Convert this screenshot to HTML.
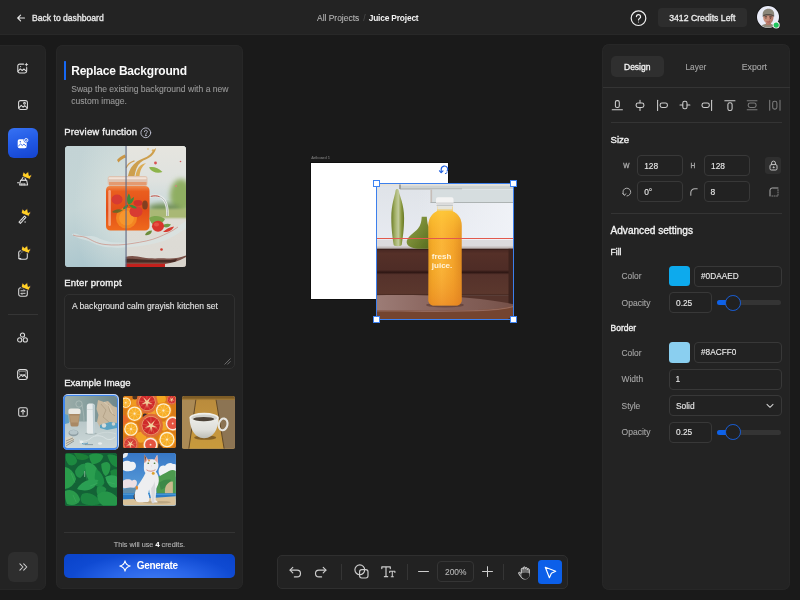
<!DOCTYPE html>
<html lang="en">
<head>
<meta charset="utf-8">
<title>Juice Project – Replace Background</title>
<style>
*{box-sizing:border-box;margin:0;padding:0}
html,body{width:800px;height:600px;overflow:hidden;background:#1a1a1a}
body{font-family:"Liberation Sans",sans-serif;color:#fff;position:relative;-webkit-font-smoothing:antialiased}
#app{position:absolute;left:0;top:0;width:800px;height:600px;will-change:transform}
.abs{position:absolute}
.t{position:absolute;white-space:nowrap;line-height:12px;height:12px;font-size:8.5px;-webkit-text-stroke:.1px currentColor}
.m{-webkit-text-stroke:.32px currentColor}
.b{font-weight:700;-webkit-text-stroke:0}
.g{color:#a3a3a3}
#hdr{position:absolute;left:0;top:0;width:800px;height:35px;background:#232323;border-bottom:1px solid #282828}
#side{position:absolute;left:0;top:45px;width:46px;height:545px}
#side:before{content:"";position:absolute;left:-3px;top:0;width:49px;height:545px;background:#232323;border-radius:0 6.500px 6.500px 0;box-shadow:inset 0 0 0 1px #272727}
#left{position:absolute;left:56px;top:45px;width:187px;height:544px;background:#232323;border-radius:6.500px;box-shadow:inset 0 0 0 1px #272727}
#right{position:absolute;left:603px;top:45px;width:187px;height:544px}
#right:before{content:"";position:absolute;left:-1px;top:-1px;width:188px;height:546px;background:#232323;border-radius:7px;box-shadow:inset 0 0 0 1px #272727}
.hr{position:absolute;height:1px;background:#333}
.inp{position:absolute;height:21px;border:1px solid #383838;border-radius:4px;background:#222}
.ico{position:absolute;overflow:visible}
svg{display:block}
.hd{width:6.800px;height:6.800px;background:#fff;border:1px solid #3f84f3}
.ex{border-radius:2.500px;overflow:hidden}
</style>
</head>
<body>
<div id="app">

<!-- ================= HEADER ================= -->
<div id="hdr">
  <svg class="ico" style="left:17px;top:13.5px" width="8" height="8" viewBox="0 0 8 8" fill="none" stroke="#e6e6e6" stroke-width="1.1" stroke-linecap="round" stroke-linejoin="round"><path d="M7.5 4H0.8M3.6 1.1 0.7 4l2.9 2.9"/></svg>
  <div class="t m" style="left:32px;top:11.5px;font-size:8.6px;color:#e8e8e8">Back to dashboard</div>
  <div class="t" style="left:317px;top:11.5px;font-size:8.45px;color:#b4b4b4">All Projects</div>
  <div class="t" style="left:363.2px;top:11.5px;font-size:8.5px;color:#4a4a4a">/</div>
  <div class="t b" style="left:368.7px;top:11.5px;font-size:8.4px;letter-spacing:-.18px;color:#f2f2f2">Juice Project</div>
  <!-- help -->
  <svg class="ico" style="left:630px;top:9.5px" width="17" height="17" viewBox="0 0 17 17" fill="none" stroke="#f0f0f0" stroke-width="1.2" stroke-linecap="round" stroke-linejoin="round"><circle cx="8.5" cy="8.2" r="7.3"/><path d="M6.4 6.6a2.1 2.1 0 1 1 3.1 1.9c-.7.4-1 .8-1 1.5"/><circle cx="8.5" cy="12" r=".5" fill="#f0f0f0" stroke="none"/></svg>
  <div class="abs" style="left:658px;top:8px;width:89px;height:19px;background:#2d2d2d;border-radius:4px"></div>
  <div class="t m" style="left:669.2px;top:11.5px;font-size:8.7px;color:#ededed">3412 Credits Left</div>
  <!-- avatar -->
  <svg class="ico" style="left:757px;top:6px" width="24" height="24" viewBox="0 0 24 24">
    <defs><clipPath id="avc"><circle cx="11" cy="11" r="10.700"/></clipPath></defs>
    <circle cx="11" cy="11" r="11.700" fill="#141414"/>
    <circle cx="11" cy="11" r="11" fill="#e9ebf7"/>
    <g clip-path="url(#avc)">
      <path d="M2.500 24c0-4.200 3.500-6.300 8.700-6.300s8.300 2.100 8.300 6.300z" fill="#8e8a7c"/>
      <rect x="8.800" y="14" width="5" height="5.200" fill="#b27a69"/>
      <ellipse cx="11.300" cy="11.400" rx="5.100" ry="6.100" fill="#c88e7b"/>
      <path d="M16 9c.8 2 .6 5-1 7.500-.8 1.200-2 2-3.500 2l1-10z" fill="#a86e60" opacity=".55"/>
      <path d="M5.700 9.600C5.300 5 7.900 2.800 11.500 2.800c3.700 0 6.100 2.300 5.700 6.700-1.600-1.200-3.600-1.600-5.900-1.600-2.300 0-4.100.5-5.600 1.700z" fill="#8b867a"/>
      <path d="M5.600 9.700c1.500-1.200 3.300-1.600 5.700-1.600 2.400 0 4.300.4 5.900 1.500l-.1 1.100c-1.700-.9-3.500-1.200-5.800-1.200-2.300 0-4 .3-5.600 1.300z" fill="#55504a"/>
      <path d="M7.600 10.900c.8-.4 1.700-.4 2.500 0M12.300 10.900c.8-.4 1.700-.4 2.500 0" stroke="#3c2c28" stroke-width=".8" fill="none"/>
      <circle cx="8.900" cy="12" r=".55" fill="#2c2220"/><circle cx="13.500" cy="12" r=".55" fill="#2c2220"/>
      <path d="M9.600 15.700c1 .5 2.200.5 3.200 0" stroke="#a04a48" stroke-width=".9" fill="none"/>
    </g>
    <circle cx="19.200" cy="19.100" r="3.500" fill="#f4f4f4"/>
    <circle cx="19.200" cy="19.100" r="2.600" fill="#1fc55c"/>
  </svg>
</div>

<!-- ================= SIDEBAR ================= -->
<div id="side">
  <!-- 1 image+ -->
  <svg class="ico" style="left:17px;top:17.500px" width="12" height="11" viewBox="0 0 12 11" fill="none" stroke="#dcdcdc" stroke-width="1.050" stroke-linecap="round" stroke-linejoin="round"><path d="M6.600 1.100H2.700A1.900 1.900 0 0 0 .8 3v5.100A1.900 1.900 0 0 0 2.700 10h5.100a1.900 1.900 0 0 0 1.900-1.900V4.600"/><path d="M.9 8.300 3.300 5.900l1.900 1.600 1.700-1.500 2.700 2.300"/><path d="M9.400.3v2.600M8.100 1.600h2.600" stroke-width=".9"/><circle cx="3.600" cy="3.600" r=".6" fill="#dcdcdc" stroke="none"/></svg>
  <!-- 2 image -->
  <svg class="ico" style="left:17.500px;top:55px" width="10" height="10" viewBox="0 0 10 10" fill="none" stroke="#dcdcdc" stroke-width="1.050" stroke-linecap="round" stroke-linejoin="round"><rect x=".6" y=".6" width="8.800" height="8.800" rx="2"/><path d="M.8 7.900 3.300 5.400l1.800 1.700 1.600-1.500 2.500 2.300"/><circle cx="6.500" cy="3.300" r=".9"/></svg>
  <!-- 3 active -->
  <div class="abs" style="left:8px;top:83px;width:29.500px;height:29.500px;border-radius:6px;background:linear-gradient(165deg,#3772f3 0%,#2159e4 50%,#1443cf 100%)"></div>
  <svg class="ico" style="left:17px;top:92.500px" width="12" height="11" viewBox="0 0 12 11"><path d="M2.500 1.300h4.100a2.600 2.600 0 0 0 3.100 3.300V8.500a1.800 1.800 0 0 1-1.800 1.800H2.500A1.800 1.800 0 0 1 .7 8.500V3.100a1.800 1.800 0 0 1 1.800-1.800z" fill="#fff"/><circle cx="9.200" cy="2.200" r="1.700" fill="none" stroke="#fff" stroke-width=".9"/><circle cx="9.200" cy="2.200" r=".5" fill="#fff"/><path d="M1.200 8.200 3.600 6l1.700 1.500L6.900 6.100l2.400 2.200" fill="none" stroke="#2a60e6" stroke-width=".9" stroke-linejoin="round"/><circle cx="3.300" cy="3.800" r=".7" fill="#2a60e6"/></svg>
  <!-- 4 eraser + crown -->
  <svg class="ico" style="left:16.500px;top:130.500px" width="14" height="11" viewBox="0 0 14 11" fill="none" stroke="#dcdcdc" stroke-width="1.050" stroke-linecap="round" stroke-linejoin="round"><path d="M6.200.9 4.300 4.200h4.600L7.600.9z"/><path d="M3.600 4.200h6l1 4.700H2.600z"/><path d="M.5 6.800h1.600M4.200 8.900V7.600M6 8.900V7.300M7.800 8.900V7.600"/></svg>
  <!-- 5 wand + crown -->
  <svg class="ico" style="left:17.500px;top:169px" width="10" height="10" viewBox="0 0 10 10" fill="none" stroke="#dcdcdc" stroke-width="1.050" stroke-linecap="round" stroke-linejoin="round"><path d="M1 8.100 6.500 2.100l1.400 1.300L2.400 9.400z"/><path d="M5.300 3.400l1.400 1.300" stroke-width=".8"/><path d="M2.600 6.300l1.400 1.300M3.900 4.900l1.400 1.300" stroke-width=".6" stroke="#777"/><circle cx="7.100" cy="8" r=".7" fill="#dcdcdc" stroke="none"/></svg>
  <!-- 6 square corner + crown -->
  <svg class="ico" style="left:17.500px;top:204.500px" width="10" height="10" viewBox="0 0 10 10" fill="none" stroke="#dcdcdc" stroke-width="1.050" stroke-linecap="round" stroke-linejoin="round"><rect x=".7" y=".7" width="8.600" height="8.600" rx="2"/><path d="M1 7.300c.3-2.200 1.200-3.700 2.300-4.600C4.400 1.800 5.800 1.300 7.500 1" stroke="#8a8a8a" stroke-width=".7"/><path d="M.9 8.600h1.800" stroke-width="1.300"/></svg>
  <!-- 7 swap + crown -->
  <svg class="ico" style="left:17.500px;top:241.700px" width="10" height="10" viewBox="0 0 10 10" fill="none" stroke="#dcdcdc" stroke-width="1.050" stroke-linecap="round" stroke-linejoin="round"><rect x=".7" y=".7" width="8.600" height="8.600" rx="2"/><path d="M2.900 3.800h4.300L6 2.600M7.100 6.300H2.800L4 7.500" stroke-width=".95"/></svg>
  <!-- crowns -->
  <svg class="ico" style="left:21.7px;top:124.6px" width="10.400" height="9.250" viewBox="0 0 9 8"><g transform="rotate(22 4.500 4)"><path d="M.9 7 .5 2.300l2.300 1.800L4.500.8l1.700 3.300 2.300-1.800L8.100 7z" fill="#ffc61a" stroke="#1e1e30" stroke-width=".7" stroke-linejoin="round"/><path d="M1.600 6.300 1.300 3.600l1.700 1.200L4.500 2l1.500 2.800 1.700-1.200-.3 2.700z" fill="#ffd028"/></g></svg>
  <svg class="ico" style="left:21.2px;top:161.6px" width="10.400" height="9.250" viewBox="0 0 9 8"><g transform="rotate(22 4.500 4)"><path d="M.9 7 .5 2.300l2.300 1.800L4.500.8l1.700 3.300 2.300-1.800L8.100 7z" fill="#ffc61a" stroke="#1e1e30" stroke-width=".7" stroke-linejoin="round"/><path d="M1.600 6.300 1.300 3.600l1.700 1.200L4.500 2l1.500 2.800 1.700-1.200-.3 2.700z" fill="#ffd028"/></g></svg>
  <svg class="ico" style="left:21.4px;top:199.1px" width="10.400" height="9.250" viewBox="0 0 9 8"><g transform="rotate(22 4.500 4)"><path d="M.9 7 .5 2.300l2.300 1.800L4.500.8l1.700 3.300 2.300-1.800L8.100 7z" fill="#ffc61a" stroke="#1e1e30" stroke-width=".7" stroke-linejoin="round"/><path d="M1.600 6.300 1.300 3.600l1.700 1.200L4.500 2l1.500 2.800 1.700-1.200-.3 2.700z" fill="#ffd028"/></g></svg>
  <svg class="ico" style="left:21.4px;top:236.1px" width="10.400" height="9.250" viewBox="0 0 9 8"><g transform="rotate(22 4.500 4)"><path d="M.9 7 .5 2.300l2.300 1.800L4.500.8l1.700 3.300 2.300-1.800L8.100 7z" fill="#ffc61a" stroke="#1e1e30" stroke-width=".7" stroke-linejoin="round"/><path d="M1.600 6.300 1.300 3.600l1.700 1.200L4.500 2l1.500 2.800 1.700-1.200-.3 2.700z" fill="#ffd028"/></g></svg>
  <div class="hr" style="left:8px;top:269.200px;width:29.500px;background:#353535"></div>
  <!-- 8 circles -->
  <svg class="ico" style="left:16px;top:286.500px" width="13" height="12" viewBox="0 0 13 12" fill="none" stroke="#dcdcdc" stroke-width="1.050"><circle cx="6.500" cy="3" r="2.100"/><circle cx="3.700" cy="7.900" r="2.100"/><circle cx="9.300" cy="7.900" r="2.100"/></svg>
  <!-- 9 gallery -->
  <svg class="ico" style="left:17px;top:324px" width="11" height="11" viewBox="0 0 11 11" fill="none" stroke="#dcdcdc" stroke-width="1.050" stroke-linecap="round" stroke-linejoin="round"><rect x=".6" y=".6" width="9.800" height="9.800" rx="2.400"/><rect x="2.100" y="2.300" width="6.800" height="3.200" rx=".6" stroke-width=".8" stroke="#9a9a9a"/><path d="M1.200 9 4.200 6l1.500 1.400L7.200 6l2.700 2.600"/></svg>
  <!-- 10 upload -->
  <svg class="ico" style="left:17.500px;top:362px" width="10" height="10" viewBox="0 0 10 10" fill="none" stroke="#dcdcdc" stroke-width="1.050" stroke-linecap="round" stroke-linejoin="round"><rect x=".7" y=".7" width="8.600" height="8.600" rx="1.800"/><path d="M5 7.300V3.100M3.200 4.700 5 2.900l1.800 1.800"/></svg>
  <!-- expand -->
  <div class="abs" style="left:8px;top:506.500px;width:29.500px;height:30px;border-radius:6px;background:#2e2e2e"></div>
  <svg class="ico" style="left:18.500px;top:517.500px" width="9" height="8" viewBox="0 0 9 8" fill="none" stroke="#d0d0d0" stroke-width="1.050" stroke-linecap="round" stroke-linejoin="round"><path d="M.9.900 4 4 .9 7.100M4.700.9 7.800 4 4.700 7.100"/></svg>
</div>

<!-- ================= LEFT PANEL ================= -->
<div id="left">
  <div class="abs" style="left:8px;top:16px;width:2.200px;height:19px;background:#1668f5;border-radius:.5px"></div>
  <div class="t b" style="left:15.200px;top:17.800px;line-height:16px;height:16px;font-size:12px;letter-spacing:-.205px;color:#fafafa">Replace Background</div>
  <div class="t" style="left:15.200px;top:38.300px;font-size:8.580px;color:#989898">Swap the existing background with a new</div>
  <div class="t" style="left:15.200px;top:50.300px;font-size:8.580px;color:#989898">custom image.</div>
  <div class="t m" style="left:8.200px;top:81px;font-size:9.500px;letter-spacing:.21px;color:#f4f4f4">Preview function</div>
  <svg class="ico" style="left:83.500px;top:81.800px" width="12" height="12" viewBox="0 0 12 12" fill="none" stroke="#b9bccb" stroke-width=".95" stroke-linecap="round"><circle cx="5.800" cy="5.800" r="4.900"/><path d="M4.400 4.700a1.450 1.450 0 1 1 2.100 1.300c-.5.300-.7.500-.7 1"/><circle cx="5.800" cy="8.300" r=".35" fill="#b9bccb"/></svg>
  <!-- preview image -->
  <div class="abs" id="prev" style="left:9.300px;top:101px;width:121px;height:121px;border-radius:3.500px;overflow:hidden;background:#cfdcdc"><svg width="121" height="121" viewBox="0 0 121 121">
<defs>
<linearGradient id="pl" x1="0" y1="0" x2=".35" y2="1"><stop offset="0" stop-color="#c3d3d5"/><stop offset=".5" stop-color="#c4d5d6"/><stop offset="1" stop-color="#a9c5cd"/></linearGradient>
<radialGradient id="pl2" cx=".95" cy=".5" r=".8"><stop offset="0" stop-color="#dbe3df" stop-opacity=".95"/><stop offset="1" stop-color="#dbe3df" stop-opacity="0"/></radialGradient>
<linearGradient id="pr" x1="0" y1="0" x2="0" y2="1"><stop offset="0" stop-color="#e6e5df"/><stop offset=".28" stop-color="#dfe2df"/><stop offset=".45" stop-color="#cfdbdc"/><stop offset=".55" stop-color="#ccd8d6"/><stop offset=".62" stop-color="#dedcd6"/><stop offset="1" stop-color="#dcdad4"/></linearGradient>
<linearGradient id="pj" x1="0" y1="0" x2="0" y2="1"><stop offset="0" stop-color="#ef8a4c"/><stop offset=".12" stop-color="#ea5e1e"/><stop offset=".55" stop-color="#e24d18"/><stop offset="1" stop-color="#ef6a1c"/></linearGradient>
<filter id="b1" x="-30%" y="-30%" width="160%" height="160%"><feGaussianBlur stdDeviation="1"/></filter>
<filter id="b2" x="-30%" y="-30%" width="160%" height="160%"><feGaussianBlur stdDeviation="2.500"/></filter>
<filter id="b05" x="-30%" y="-30%" width="160%" height="160%"><feGaussianBlur stdDeviation=".45"/></filter>
<clipPath id="pcl"><rect x="0" y="0" width="60.800" height="121"/></clipPath>
<clipPath id="pcr"><rect x="60.800" y="0" width="60.200" height="121"/></clipPath>
</defs>
<rect width="121" height="121" fill="url(#pl)"/>
<rect width="61" height="121" fill="url(#pl2)"/>
<g clip-path="url(#pcr)">
  <rect x="60" width="61" height="121" fill="url(#pr)"/>
  <!-- trees / field -->
  <ellipse cx="116" cy="50" rx="11" ry="17" fill="#8fae62" filter="url(#b2)"/>
  <ellipse cx="99" cy="62" rx="16" ry="4.500" fill="#6f8f55" filter="url(#b2)"/>
  <rect x="84" y="63" width="40" height="10" fill="#a9b874" filter="url(#b1)"/>
  <rect x="84" y="72.500" width="40" height="4" fill="#dedcd6" filter="url(#b1)"/>
  <!-- bottom berries -->
  <path d="M60 111c6-2 12-1 18 .5 8 1.500 16 .5 24 1 7 .5 13-1 19-3v11.500H60z" fill="#6a3a30" opacity=".85" filter="url(#b05)"/>
  <path d="M60 113c8-1 18 1 28 1 9 0 17 .5 24-1l-2 3.500H60z" fill="#3a201a" opacity=".8" filter="url(#b05)"/>
  <rect x="60" y="117.800" width="46" height="3.200" fill="#c4201c"/>
  <path d="M100 118c7-1 14-3 21-7v10h-21z" fill="#d8d4cc" filter="url(#b05)"/>
  <circle cx="96.500" cy="103.500" r="1.300" fill="#d4382c"/>
</g>
<!-- water puddle -->
<path d="M7 52c3-1.500 6 .5 9 1.500 5 1.500 10-.5 15 1.500 5 2 10 5 20 5.500 12 .6 22-1 33-3.500 9-2 16-4 22-8 5-3 9-6 15-10v7c-6 4-11 8-18 11-9 4-20 6-32 7.500-11 1.300-22 1.500-30 .5-8-1-13-4.500-19-6.500-5-1.600-10-2-15-6z" transform="translate(0 36)" fill="#d9e3e3" opacity=".75" filter="url(#b05)"/>
<path d="M8 89c4 2 8 .5 13 2.500 6 2.500 10 6 19 7 9 1 18 .5 27-1 10-1.600 19-3 27-6.500 6-2.600 12-5 19-10" fill="none" stroke="#c97868" stroke-width=".7" opacity=".8" filter="url(#b05)"/>
<!-- splash -->
<g clip-path="url(#pcr)">
<path d="M63 30c1-6 4-11 9-14.500 4-2.700 9-3.500 13-7 2-1.800 3.500-4.500 6-6.500-.3 2.600-1.800 5.500-4.500 8-3 2.800-7.500 3.500-11 6.500-3.500 3-5 8-6 13.500z" fill="#c8902e" opacity=".82" filter="url(#b05)"/>
<path d="M70.500 30c.8-4.500 2.200-8 5-10.500 1.600-1.400 3.500-2.200 5.500-2.600-1.700 1.500-3.300 3.200-4.500 5.600-1.200 2.400-1.700 5-2 7.500z" fill="#d9a23e" opacity=".85"/>
<path d="M61 22c1.500-3.500 4.500-6 8.500-7.200" stroke="#c98a2a" stroke-width="1.300" fill="none" opacity=".75"/>
<circle cx="88" cy="4.500" r="1.200" fill="#d9a23e" opacity=".8"/><circle cx="83" cy="3" r=".8" fill="#d9a23e" opacity=".7"/>
<path d="M84 21.500c4-1.200 9 0 13.500 4.500-4.500 1.800-10.500.8-13.500-4.500z" fill="#8db44a"/>
<circle cx="90.500" cy="17" r="1.400" fill="#d95050"/>
<circle cx="115.500" cy="15.500" r=".8" fill="#d46060"/>
<circle cx="111" cy="40" r=".9" fill="#d88080"/>
</g>
<g clip-path="url(#pcl)">
<path d="M52 14c2-2.500 5-4.500 8-5.500l1 3c-3 1-5.500 2.500-7.500 5z" fill="#c98a2a" opacity=".85"/>
</g>
<!-- handle -->
<path d="M84.500 50.500c6-1.500 12-.5 15 4 2.500 4 3.200 9 3 15.500" fill="none" stroke="#eef0ee" stroke-width="2.600" opacity=".9" filter="url(#b05)"/>
<path d="M84.500 50.500c6-1.500 12-.5 15 4 2.500 4 3.200 9 3 15.500" fill="none" stroke="#8f9a9c" stroke-width=".7" opacity=".8"/>
<path d="M86 50.400c3-.8 6-.8 8.500.3" fill="none" stroke="#c83a2a" stroke-width="1" opacity=".8"/>
<!-- jar -->
<rect x="42.700" y="30" width="39.800" height="9.500" rx="2.500" fill="#dfc0ac" opacity=".9"/>
<rect x="43.500" y="31.200" width="38" height="2" rx="1" fill="#f4e6dc" opacity=".9"/>
<rect x="44" y="36" width="37.500" height="3.500" fill="#e59060" opacity=".8"/>
<path d="M45 40h35c2.800 0 4.500 1.800 4.500 4.500V80c0 2.800-1.700 4.600-4.500 4.600H45.500c-2.800 0-4.500-1.800-4.500-4.600V44.500c0-2.700 1.200-4.500 4-4.500z" fill="url(#pj)"/>
<rect x="43.300" y="44" width="2.600" height="36" rx="1.300" fill="#f6b89c" opacity=".8" filter="url(#b05)"/>
<!-- orange slice -->
<circle cx="61.500" cy="72" r="10.500" fill="#f58a22" opacity=".9" filter="url(#b05)"/>
<circle cx="61.500" cy="72" r="7.500" fill="#f79a30" opacity=".8"/>
<!-- strawberries in jar -->
<ellipse cx="52" cy="53.500" rx="5.500" ry="5" fill="#d63a30" filter="url(#b05)"/>
<ellipse cx="71" cy="65.500" rx="6.500" ry="5.500" fill="#d83a32" filter="url(#b05)"/>
<ellipse cx="73" cy="57" rx="4.500" ry="3" fill="#d0322c" filter="url(#b05)"/>
<ellipse cx="80" cy="59" rx="2.800" ry="4.500" fill="#6a3a22" opacity=".8" filter="url(#b05)"/>
<!-- mint -->
<path d="M61.500 58c-2-3.500-1.500-7.500.5-10.500 2 3 2.500 7 .5 10.500zM62.500 58c0-3 1.500-5.500 4.500-7-.2 3.500-1.600 6-4.500 7zM62 58.500c3-.5 6 .5 8 3.500-3.500.5-6-.5-8-3.500zM61.500 58.500c-2.500 0-4.500 1.500-5.500 4.500 3-.2 5-1.700 5.500-4.500z" fill="#3f8a3a" transform="translate(0 -1.500) scale(1.030)"/>
<path d="M47 66c3-3 7-3.500 11-2-3.500 3-7.500 3.600-11 2z" fill="#5a6a2a" opacity=".85"/>
<!-- outside strawberry & leaves -->
<path d="M84 72c5-3 11-2.500 16 1-2 4-6 6.500-10 6.500-3-1-5-4-6-7.500z" fill="#7da650" filter="url(#b05)"/>
<path d="M97 80c2.500-2.500 6-3 9-1.500-2 3-5.500 4-9 1.500z" fill="#6f9a48"/>
<path d="M80 89c1-3 3.500-4.500 7-4.500-.5 3.500-3 5.300-7 4.500z" fill="#6c8c3a"/>
<ellipse cx="93" cy="80.200" rx="6" ry="5.500" fill="#da342c"/>
<ellipse cx="91.500" cy="78.500" rx="2.500" ry="2" fill="#ea5a4c" opacity=".8"/>
<path d="M98 86c3-3 7-5 11-5.500-1.500 3.500-5.500 6-11 5.500z" fill="#d63a30"/>
<!-- divider -->
<rect x="60.500" y="0" width="1.100" height="121" fill="#5b6781"/>
</svg></div>
  <div class="t m" style="left:8.200px;top:232px;font-size:9.500px;letter-spacing:.22px;color:#f4f4f4">Enter prompt</div>
  <div class="abs" style="left:8px;top:249px;width:171px;height:74.500px;border:1px solid #303030;border-radius:5px;background:#222"></div>
  <div class="t" style="left:16px;top:254.800px;font-size:8.560px;color:#e4e4e4">A background calm grayish kitchen set</div>
  <svg class="ico" style="left:167.500px;top:312.500px" width="7" height="7" viewBox="0 0 7 7" fill="none" stroke="#8c8c8c" stroke-width=".7" stroke-linecap="round"><path d="M.8 6.200 6.200.8M3.600 6.200 6.200 3.600"/></svg>
  <div class="t m" style="left:8.200px;top:332.300px;font-size:9.550px;color:#f4f4f4">Example Image</div>
  <!-- examples -->
  <div class="abs" style="left:6.700px;top:349px;width:56.300px;height:56.400px;border-radius:5px;background:#c3d6f4"></div><div class="abs" style="left:7.400px;top:349.700px;width:54.900px;height:55px;border-radius:4.400px;background:#3f86ee"></div>
  <div class="abs ex" id="ex1" style="left:8.700px;top:351px;width:52.300px;height:52.400px;border-radius:3.200px;background:#aebcc0"><svg width="52.400" height="52.600" viewBox="0 0 52.400 52.600" preserveAspectRatio="none">
<defs><linearGradient id="e1a" x1="0" y1="0" x2="1" y2="0"><stop offset="0" stop-color="#9cada9"/><stop offset=".4" stop-color="#88a09f"/><stop offset="1" stop-color="#6f878b"/></linearGradient>
<linearGradient id="e1b" x1="0" y1="0" x2="0" y2="1"><stop offset="0" stop-color="#b9c8c9"/><stop offset="1" stop-color="#cdd8d8"/></linearGradient>
<filter id="e1f" x="-20%" y="-20%" width="140%" height="140%"><feGaussianBlur stdDeviation=".4"/></filter></defs>
<rect width="52.400" height="52.600" fill="url(#e1a)"/>
<path d="M0 27c12-2 26-2 52.400 1v24.600H0z" fill="url(#e1b)"/>
<!-- paper -->
<path d="M33 4l6 2 4-1 5 5 4 1.500V27l-6 3-5-2-6 3-3-5 1.500-7-2-6z" fill="#c9b99f" filter="url(#e1f)"/>
<path d="M36 8l5 6-3 7 6 5M43 8l2 8 5 4" stroke="#a8977c" stroke-width=".8" fill="none" opacity=".8"/>
<path d="M39 6l5 4 4 8" stroke="#e2d6c0" stroke-width=".8" fill="none" opacity=".8"/>
<!-- blue items -->
<path d="M35 29l10-3 7 1v5l-10 2-7-2z" fill="#5ba3c2" filter="url(#e1f)"/>
<path d="M0 18l3 1 1 8-4 1z" fill="#5f9fc4"/>
<circle cx="39" cy="29.500" r="2.200" fill="#d8dcda"/>
<circle cx="48.500" cy="28" r="1.800" fill="#cfd2cc"/>
<!-- swirl -->
<circle cx="14" cy="8" r="3.200" fill="none" stroke="#c6d0cd" stroke-width=".6" opacity=".8"/>
<path d="M17 9c1 5 2 10 2 16" fill="none" stroke="#c6d0cd" stroke-width=".6" opacity=".7"/>
<!-- coffee cup -->
<path d="M4.200 17.500h10.600l-1.300 11.500c-.2 1.200-1 1.600-2.300 1.600H7.800c-1.300 0-2.100-.4-2.300-1.600z" fill="#a98964"/>
<path d="M4.900 19.500h9.200l-.8 7H5.700z" fill="#b89a74"/>
<path d="M3.400 14.400c0-1.300 1.200-2 2.500-2h7.200c1.300 0 2.500.7 2.500 2v2.300c0 .8-.5 1.200-1.300 1.200H4.700c-.8 0-1.300-.4-1.300-1.200z" fill="#e9e9e3"/>
<!-- bottle -->
<ellipse cx="26" cy="37.500" rx="6" ry="1.200" fill="#8fa0a0" opacity=".6" filter="url(#e1f)"/>
<path d="M21.800 10c0-1.600 1-2.500 2.600-2.500h2.800c1.600 0 2.600.9 2.600 2.500v26c0 1.200-.8 1.800-2 1.800h-4c-1.200 0-2-.6-2-1.800z" fill="#e6ebeb"/>
<path d="M27.600 8c1.400.2 2.200 1 2.200 2.500v26c0 1-.6 1.600-1.500 1.800z" fill="#b9cbd0"/>
<rect x="21.800" y="13" width="8" height=".5" fill="#c3cdcd"/>
<!-- earbuds, cables -->
<path d="M14 44c4 2 9 1 12-2 4-3 10-3 14 0 3 2.500 7 2 10-1" fill="none" stroke="#e4ecec" stroke-width=".7" opacity=".9"/>
<path d="M30 40c5-4 14-5 21-2" fill="none" stroke="#e0e8e8" stroke-width=".5" opacity=".8"/>
<ellipse cx="16.500" cy="46" rx="2" ry="1.300" fill="#e9eeee"/>
<ellipse cx="35" cy="47.500" rx="2" ry="1.300" fill="#e9eeee"/>
<path d="M17 47.500c2 1 4 .5 6-.5" stroke="#4f93b8" stroke-width=".9" fill="none"/>
<rect x="20" y="48.300" width="8" height=".8" fill="#6d8088" opacity=".8"/>
<!-- round tin -->
<ellipse cx="8.500" cy="37" rx="5" ry="3.200" fill="#8e9ea3"/>
<ellipse cx="8.500" cy="36.300" rx="4" ry="2.300" fill="#b7c6ca"/>
<!-- notebook -->
<path d="M0 42l6-2 4 3-10 8z" fill="#d8d3c3"/>
<path d="M1 45l7-3M1 47.500l8-4M1 50l8-5" stroke="#5c5a52" stroke-width=".5"/>
</svg></div>
  <div class="abs ex" id="ex2" style="left:66.900px;top:350.700px;width:52.800px;height:52.600px;background:#e8901a"><svg width="52.800" height="52.600" viewBox="0 0 52.900 52.400" preserveAspectRatio="none"><defs><filter id="e2f" x="-10%" y="-10%" width="120%" height="120%"><feGaussianBlur stdDeviation=".3"/></filter></defs><rect width="52.900" height="52.400" fill="#d87a18"/><g filter="url(#e2f)"><circle cx="12" cy="8" r="5" fill="#ef9a22"/><circle cx="38" cy="3" r="5" fill="#f2a622"/><circle cx="29" cy="16.500" r="4" fill="#f0a030"/><circle cx="18" cy="41" r="5.500" fill="#f2a428"/><circle cx="41" cy="30" r="4.500" fill="#f0a828"/><circle cx="1" cy="24" r="5" fill="#e66a28"/><circle cx="22" cy="20" r="2.500" fill="#3a2a30"/><circle cx="37" cy="50" r="3" fill="#5a3018"/><circle cx="12" cy="1" r="2.500" fill="#4a3020"/><circle cx="24" cy="6.2" r="10.8" fill="#df6a38"/><circle cx="24" cy="6.2" r="8.64" fill="#e9a070"/><circle cx="24" cy="6.2" r="7.99" fill="#cf2a2c"/><path d="M24.00 6.20L30.82 9.93M24.00 6.20L26.83 13.44M24.00 6.20L21.51 13.57M24.00 6.20L17.36 10.25M24.00 6.20L16.31 5.03M24.00 6.20L18.86 0.36M24.00 6.20L23.82 -1.57M24.00 6.20L28.86 0.13M24.00 6.20L31.62 4.67" stroke="#e8705c" stroke-width=".6" fill="none" opacity=".8"/><polygon points="29.78,7.99 24.91,7.41 24.09,12.25 23.13,7.44 18.28,8.15 22.56,5.75 20.38,1.36 23.98,4.69 27.49,1.26 25.43,5.71" fill="#f3dca4" opacity=".92"/><circle cx="2.8" cy="6.7" r="5.9" fill="#ee8f17"/><circle cx="2.8" cy="6.7" r="5.13" fill="#fdf0d4"/><circle cx="2.8" cy="6.7" r="4.25" fill="#f8ae26"/><path d="M3.38 6.82L6.85 7.52M3.13 7.19L5.08 10.14M2.68 7.28L1.98 10.75M2.31 7.03L-0.64 8.98M2.22 6.58L-1.25 5.88M2.47 6.21L0.52 3.26M2.92 6.12L3.62 2.65M3.29 6.37L6.24 4.42" stroke="#fbd27a" stroke-width=".45" fill="none"/><circle cx="2.8" cy="6.7" r="0.77" fill="#fdeccb"/><circle cx="11.6" cy="17.6" r="8.3" fill="#ee8f17"/><circle cx="11.6" cy="17.6" r="7.22" fill="#fdf0d4"/><circle cx="11.6" cy="17.6" r="5.98" fill="#f8ae26"/><path d="M12.41 17.76L17.29 18.75M12.06 18.29L14.81 22.44M11.44 18.41L10.45 23.29M10.91 18.06L6.76 20.81M10.79 17.44L5.91 16.45M11.14 16.91L8.39 12.76M11.76 16.79L12.75 11.91M12.29 17.14L16.44 14.39" stroke="#fbd27a" stroke-width=".45" fill="none"/><circle cx="11.6" cy="17.6" r="1.08" fill="#fdeccb"/><circle cx="40.5" cy="14.5" r="8.5" fill="#ee8f17"/><circle cx="40.5" cy="14.5" r="7.39" fill="#fdf0d4"/><circle cx="40.5" cy="14.5" r="6.12" fill="#f8ae26"/><path d="M41.33 14.67L46.33 15.68M40.97 15.21L43.79 19.46M40.33 15.33L39.32 20.33M39.79 14.97L35.54 17.79M39.67 14.33L34.67 13.32M40.03 13.79L37.21 9.54M40.67 13.67L41.68 8.67M41.21 14.03L45.46 11.21" stroke="#fbd27a" stroke-width=".45" fill="none"/><circle cx="40.5" cy="14.5" r="1.1" fill="#fdeccb"/><circle cx="28.1" cy="29.5" r="11.9" fill="#df6a38"/><circle cx="28.1" cy="29.5" r="9.52" fill="#e9a070"/><circle cx="28.1" cy="29.5" r="8.81" fill="#cf2a2c"/><path d="M28.10 29.50L35.62 33.61M28.10 29.50L31.22 37.48M28.10 29.50L25.36 37.62M28.10 29.50L20.78 33.96M28.10 29.50L19.63 28.21M28.10 29.50L22.44 23.07M28.10 29.50L27.90 20.93M28.10 29.50L33.45 22.81M28.10 29.50L36.50 27.81" stroke="#e8705c" stroke-width=".6" fill="none" opacity=".8"/><polygon points="34.47,31.47 29.10,30.83 28.19,36.16 27.14,30.86 21.79,31.65 26.51,29.01 24.11,24.16 28.08,27.83 31.94,24.05 29.68,28.96" fill="#f3dca4" opacity=".92"/><circle cx="8" cy="33" r="7.8" fill="#ee8f17"/><circle cx="8" cy="33" r="6.79" fill="#fdf0d4"/><circle cx="8" cy="33" r="5.62" fill="#f8ae26"/><path d="M8.76 33.15L13.35 34.08M8.43 33.65L11.02 37.55M7.85 33.76L6.92 38.35M7.35 33.43L3.45 36.02M7.24 32.85L2.65 31.92M7.57 32.35L4.98 28.45M8.15 32.24L9.08 27.65M8.65 32.57L12.55 29.98" stroke="#fbd27a" stroke-width=".45" fill="none"/><circle cx="8" cy="33" r="1.01" fill="#fdeccb"/><circle cx="49.8" cy="27.4" r="7.8" fill="#ee9a3a"/><circle cx="49.8" cy="27.4" r="6.86" fill="#fbeee0"/><circle cx="49.8" cy="27.4" r="5.46" fill="#e5523f"/><circle cx="49.8" cy="27.4" r="0.94" fill="#f9dccc"/><circle cx="44.1" cy="43.4" r="8.8" fill="#ee8f17"/><circle cx="44.1" cy="43.4" r="7.66" fill="#fdf0d4"/><circle cx="44.1" cy="43.4" r="6.34" fill="#f8ae26"/><path d="M44.96 43.57L50.14 44.62M44.59 44.13L47.50 48.53M43.93 44.26L42.88 49.44M43.37 43.89L38.97 46.80M43.24 43.23L38.06 42.18M43.61 42.67L40.70 38.27M44.27 42.54L45.32 37.36M44.83 42.91L49.23 40.00" stroke="#fbd27a" stroke-width=".45" fill="none"/><circle cx="44.1" cy="43.4" r="1.14" fill="#fdeccb"/><circle cx="7.4" cy="48" r="8.3" fill="#e2683a"/><circle cx="7.4" cy="48" r="6.64" fill="#e9a070"/><circle cx="7.4" cy="48" r="6.14" fill="#d23a34"/><path d="M7.40 48.00L12.64 50.87M7.40 48.00L9.58 53.57M7.40 48.00L5.49 53.66M7.40 48.00L2.30 51.11M7.40 48.00L1.49 47.10M7.40 48.00L3.45 43.51M7.40 48.00L7.26 42.03M7.40 48.00L11.13 43.33M7.40 48.00L13.26 46.82" stroke="#e8705c" stroke-width=".6" fill="none" opacity=".8"/><polygon points="11.84,49.37 8.10,48.93 7.47,52.65 6.73,48.95 3.00,49.50 6.29,47.66 4.62,44.28 7.38,46.84 10.08,44.20 8.50,47.63" fill="#f3dca4" opacity=".92"/><circle cx="27.6" cy="48.5" r="7.8" fill="#ee9a3a"/><circle cx="27.6" cy="48.5" r="6.86" fill="#fbeee0"/><circle cx="27.6" cy="48.5" r="5.46" fill="#e5523f"/><circle cx="27.6" cy="48.5" r="0.94" fill="#f9dccc"/><circle cx="48.8" cy="3.6" r="5.2" fill="#df6a38"/><circle cx="48.8" cy="3.6" r="4.16" fill="#e9a070"/><circle cx="48.8" cy="3.6" r="3.85" fill="#cf2a2c"/><path d="M48.80 3.60L52.09 5.39M48.80 3.60L50.16 7.09M48.80 3.60L47.60 7.15M48.80 3.60L45.60 5.55M48.80 3.60L45.10 3.04M48.80 3.60L46.33 0.79M48.80 3.60L48.71 -0.14M48.80 3.60L51.14 0.68M48.80 3.60L52.47 2.86" stroke="#e8705c" stroke-width=".6" fill="none" opacity=".8"/><polygon points="51.58,4.46 49.24,4.18 48.84,6.51 48.38,4.19 46.04,4.54 48.10,3.38 47.06,1.27 48.79,2.87 50.48,1.22 49.49,3.37" fill="#f3dca4" opacity=".92"/></g></svg></div>
  <div class="abs ex" id="ex3" style="left:125.900px;top:351px;width:52.800px;height:52.600px;background:#a88850"><svg width="52.800" height="52.600" viewBox="0 0 52.400 52.400" preserveAspectRatio="none">
<defs><linearGradient id="e3a" x1="0" y1="0" x2="0" y2="1"><stop offset="0" stop-color="#b88a3c"/><stop offset=".5" stop-color="#c2933f"/><stop offset="1" stop-color="#c89a3c"/></linearGradient>
<filter id="e3f" x="-20%" y="-20%" width="140%" height="140%"><feGaussianBlur stdDeviation=".6"/></filter>
<linearGradient id="e3c" x1="0" y1="0" x2="0" y2="1"><stop offset="0" stop-color="#ecece8"/><stop offset=".6" stop-color="#dededa"/><stop offset="1" stop-color="#bdbdb6"/></linearGradient></defs>
<rect width="52.400" height="52.400" fill="#a58552"/>
<path d="M14.500 0h18.500L41.500 52.400H7z" fill="url(#e3a)"/>
<path d="M33.500 0h19v52.400H42z" fill="#8c7453"/>
<path d="M0 0h14L6.500 52.400H0z" fill="#ab8a55"/>
<path d="M14.300 0 6.800 52.400M33.200 0 41.800 52.400" stroke="#5b4222" stroke-width=".9" filter="url(#e3f)"/>
<rect width="52.400" height="3.200" fill="#7d5c28" filter="url(#e3f)"/>
<rect y="2.500" width="52.400" height="1.500" fill="#a27a34" opacity=".7"/>
<ellipse cx="23" cy="41.500" rx="11" ry="2.200" fill="#6a4a1c" opacity=".7" filter="url(#e3f)"/>
<!-- handle -->
<ellipse cx="40.800" cy="28.300" rx="4.300" ry="5.900" fill="none" stroke="#e6e6e2" stroke-width="2.100" transform="rotate(12 40.800 28.300)"/>
<!-- cup -->
<path d="M7.500 21.400c0 9 4 20.600 14.400 20.600S36.400 30.400 36.400 21.400z" fill="url(#e3c)"/>
<ellipse cx="21.950" cy="21.400" rx="14.450" ry="4.600" fill="#f0f0ec"/>
<ellipse cx="21.950" cy="21.900" rx="12.800" ry="3.500" fill="#d2d2cc"/>
<ellipse cx="21.500" cy="23" rx="10.500" ry="2.100" fill="#4c4238"/>
</svg></div>
  <div class="abs ex" id="ex4" style="left:8.600px;top:408.300px;width:52.800px;height:52.600px;background:#1f7a3c"><svg width="52.800" height="52.600" viewBox="0 0 52.400 52.500" preserveAspectRatio="none">
<defs><filter id="e4f" x="-20%" y="-20%" width="140%" height="140%"><feGaussianBlur stdDeviation=".5"/></filter></defs>
<rect width="52.400" height="52.500" fill="#136236"/>
<g filter="url(#e4f)">
<path d="M1 1c5-1 10 1 11 7-1 4-4 5-8 4C1 9 0 5 1 1z" fill="#1f8a3f"/>
<path d="M9 0c5 0 12 1 15 4-2 3-7 4-12 2z" fill="#1c8038"/>
<path d="M24 2c5-2 11-2 14 1-1 5-5 8-11 8-2-3-3-6-3-9z" fill="#249444"/>
<path d="M42 2c4-1 8 0 10.400 2v10c-4 0-8-3-10.400-12z" fill="#1f8a40"/>
<path d="M36 11c4-3 8-3 9 2 0 5-2 9-5 10-3-3-4-8-4-12z" fill="#27994a"/>
<path d="M45 18c3-2 6-2 7.400-1v14c-4-1-7-6-7.400-13z" fill="#1d853e"/>
<path d="M10 18c2-5 7-8 10-7 1 5-1 11-5 14-4-1-5-4-5-7z" fill="#23904a"/>
<path d="M0 14c5 1 9 5 11 12-2 6-6 9-11 10z" fill="#2a9c4c"/>
<path d="M20 10c5-2 11 2 13 9 1 5-1 10-5 13-5-3-9-12-8-22z" fill="#2a9e50"/>
<path d="M31 16c4 2 8 8 8 14-2 4-5 5-8 3-2-5-2-12 0-17z" fill="#1f8c44"/>
<path d="M40 24c5-3 10-2 12.400 0v10c-5 2-10 0-12.400-10z" fill="#2ea457"/>
<path d="M12 36c4-8 13-11 21-9-2 8-10 13-21 9z" fill="#2c9f52"/>
<path d="M32 34c3-2 7-1 9 2-1 5-4 8-8 7-2-3-2-6-1-9z" fill="#218e46"/>
<path d="M0 38c6-3 13 1 15 9-2 5-8 6-13 4-2-4-2-9-2-13z" fill="#2a9a4c"/>
<path d="M17 41c6-3 14 0 19 9-5 3-14 3-19 0-2-3-2-6 0-9z" fill="#1c8440"/>
<path d="M32 42c6-6 15-4 20 3v7.500H38c-4-2-6-6-6-10.500z" fill="#27964a"/>
</g>
<path d="M20 19l2 8M6 20l4 10M25 33l8-3M42 29l8 2M8 42l3 7" stroke="#5cc47c" stroke-width=".4" opacity=".6" fill="none"/>
<path d="M19.500 18v6" stroke="#d8f0e0" stroke-width=".8" opacity=".6"/>
</svg></div>
  <div class="abs ex" id="ex5" style="left:66.900px;top:408.200px;width:52.800px;height:52.600px;background:#6a9fd8"><svg width="52.800" height="52.600" viewBox="0 0 52.900 52.900" preserveAspectRatio="none">
<defs><linearGradient id="e5a" x1="0" y1="0" x2="0" y2="1"><stop offset="0" stop-color="#3777c6"/><stop offset=".5" stop-color="#4f92d4"/><stop offset=".8" stop-color="#7fb5e0"/></linearGradient>
<filter id="e5f" x="-20%" y="-20%" width="140%" height="140%"><feGaussianBlur stdDeviation=".5"/></filter></defs>
<rect width="52.900" height="52.900" fill="url(#e5a)"/>
<g filter="url(#e5f)">
<path d="M0 9c3-2 6-1 8 0 3-1 5 1 5 4 0 3-3 5-6 5-3 1-5 0-7-1z" fill="#eef1f4"/>
<path d="M0 0h5c0 3-2 5-5 5z" fill="#e6ebf0"/>
<path d="M36 16c1-3 4-4 6-3 2-3 6-4 8-2 1 0 2 0 2.900.5V24H38c-2-2-3-5-2-8z" fill="#f0f2f5"/>
<path d="M0 28c3-2 7-2 9 0 2-2 5-1 5 2 0 3-2 5-5 6-3 0-6 0-9-1z" fill="#eddfe4"/>
<path d="M0 37c4-3 9-3 14-1v5H0z" fill="#5f8eb0"/>
<path d="M34 24c4-1 8-4 12-6 3-1.500 5-1 6.900 0V42H34c-1-6-1-12 0-18z" fill="#4d9a50"/>
<path d="M36 30c4-3 8-4 12-3l-2 6-8 4z" fill="#3a8444" opacity=".8"/>
<path d="M43 33c2-3 5-5 7-4v12h-8c0-3 0-6 1-8z" fill="#cbb98e"/>
</g>
<rect y="40.500" width="52.900" height="6" fill="#2a7ac4"/>
<rect y="41" width="52.900" height="1" fill="#5aa6dc" opacity=".8"/>
<path d="M0 47c15-1 35-2 52.900-3.500v9.400H0z" fill="#d9c29a"/>
<ellipse cx="34" cy="49.500" rx="14" ry="1.300" fill="#a89674" opacity=".6"/>
<!-- cat -->
<path d="M11 46c-1-3 0-5 2-6l3 7-3 1z" fill="#3a2c28"/>
<path d="M21.300 1.500 25 6.800c2-.6 4.500-.6 6.500 0L34.300 1.800l.9 8.200c.6 2 .4 4-.3 5.700-.6 1.500-1.400 2.500-2 3.200 2 2.300 3.200 5.300 3 9-.2 3-1.500 5.500-2.600 8l-.7 11.500c1.600.5 2.300 1.300 2 2.400h-5.800l-2.600-13-1.200 4c2 3.200 1.800 6.600.3 8.600l-9 .1c-2-.1-3.600-1-4.200-3-1.200-4 .2-9.500 3.200-14.200 2.500-4 5.200-7.700 7.200-12.200-1-1.200-1.700-3-1.600-5.200z" fill="#eeeef0"/>
<path d="M21.300 1.500 25 6.800l-3.300 3.500z" fill="#e7a9a0"/>
<path d="M34.300 1.800 31.500 6.800l3.400 3.200z" fill="#e7a9a0"/>
<path d="M21.300 1.500l2 3-1.600 5.800z" fill="#4a3630" opacity=".75"/>
<path d="M25 6.800l2.500-.3-1.500 2.500z" fill="#e08a3a"/>
<path d="M29 50.500l-.8-15c1.500-2 3-4 3.500-7l.6 6.500-1 15.500z" fill="#d6d6dc" opacity=".9"/>
<ellipse cx="13.800" cy="35" rx="1.300" ry="2" fill="#e48a36"/>
<ellipse cx="25.300" cy="10.300" rx=".9" ry=".7" fill="#4e7a30"/><ellipse cx="31.600" cy="10.300" rx=".9" ry=".7" fill="#4e7a30"/>
<path d="M28.100 12.800l.8 0-.4.700z" fill="#e59a9a"/>
<path d="M23.500 17c2.500 1.800 6.500 1.800 9-.2" stroke="#c05040" stroke-width=".6" fill="none"/>
<circle cx="30.300" cy="20.500" r="1.500" fill="#dba02c"/>
</svg></div>
  <div class="hr" style="left:8px;top:486.500px;width:171px;background:#343434"></div>
  <div class="t" style="left:57.700px;top:493.500px;font-size:7.300px;color:#b4b4b4">This will use <b style="color:#fff">4</b> credits.</div>
  <div class="abs" style="left:7.800px;top:508.700px;width:171.300px;height:24.500px;border-radius:5px;background:radial-gradient(ellipse 62% 150% at 52% 115%,#3f7af2 0%,#2a66ea 38%,#0f4ad2 78%,#0b45cc 100%)"></div>
  <svg class="ico" style="left:62.500px;top:514.800px" width="12" height="12" viewBox="0 0 12 12" fill="none" stroke="#fff" stroke-width="1.050" stroke-linejoin="round"><path d="M6 .8c.5 2.900 1.600 4.400 5.200 5.200C7.600 6.800 6.500 8.300 6 11.200 5.500 8.300 4.400 6.800.8 6 4.400 5.200 5.500 3.700 6 .8z"/></svg>
  <div class="t b" style="left:80.700px;top:514.800px;font-size:10px;letter-spacing:-.27px;color:#fff">Generate</div>
</div>

<!-- ================= CANVAS ================= -->
<div id="canvas">
  <div class="t" style="left:311.200px;top:155.300px;font-size:4.050px;line-height:6px;height:6px;color:#727272">Artboard 1</div>
  <div class="abs" style="left:311.400px;top:162.900px;width:136.200px;height:136.400px;background:#fff;box-shadow:0 0 0 1px #0f0f0f"></div>
  <!-- rotate cursor -->
  <svg class="ico" style="left:439px;top:164px" width="10" height="11" viewBox="0 0 10 11" fill="none" stroke="#1f5fe0" stroke-width="1.200" stroke-linecap="round" stroke-linejoin="round"><path d="M2.200 8.200V5.200A3.300 3.300 0 0 1 8.600 4.200c.3 1 .1 2-.5 2.800"/><path d="M.5 6.800 2.200 8.600 4 6.900"/><path d="M6.400 9.600 8 8.700" stroke-width="1"/></svg>
  <!-- image -->
  <div class="abs" id="juice" style="left:377px;top:183.700px;width:136px;height:136px;overflow:hidden;background:#dfe3e8"><svg width="136" height="136" viewBox="0 0 136 136">
<defs>
<linearGradient id="jw" x1="0" y1="0" x2="0" y2="1"><stop offset="0" stop-color="#dfe3e8"/><stop offset=".5" stop-color="#e9ecf3"/><stop offset="1" stop-color="#e3e5ec"/></linearGradient>
<linearGradient id="jw2" x1="0" y1="0" x2="1" y2="0"><stop offset="0" stop-color="#f1f3f8" stop-opacity="0"/><stop offset="1" stop-color="#f1f3f8" stop-opacity=".9"/></linearGradient><linearGradient id="jb" x1="0" y1="0" x2="1" y2="0"><stop offset="0" stop-color="#e59a22"/><stop offset=".12" stop-color="#f3a927"/><stop offset=".4" stop-color="#fbb63a"/><stop offset=".75" stop-color="#f3a32a"/><stop offset="1" stop-color="#e08a20"/></linearGradient>
<linearGradient id="jb2" x1="0" y1="0" x2="0" y2="1"><stop offset="0" stop-color="#ffd23a" stop-opacity=".75"/><stop offset=".25" stop-color="#ffc432" stop-opacity=".25"/><stop offset=".55" stop-color="#f09a28" stop-opacity="0"/><stop offset="1" stop-color="#e47a20" stop-opacity=".55"/></linearGradient>
<linearGradient id="jc" x1="0" y1="0" x2="0" y2="1"><stop offset="0" stop-color="#452621"/><stop offset=".1" stop-color="#553028"/><stop offset=".45" stop-color="#4e2c26"/><stop offset=".5" stop-color="#2d1613"/><stop offset=".55" stop-color="#55322b"/><stop offset=".95" stop-color="#5b372d"/><stop offset="1" stop-color="#3a201a"/></linearGradient>
<linearGradient id="jt" x1="0" y1="0" x2="1" y2="0"><stop offset="0" stop-color="#9c7c76"/><stop offset=".35" stop-color="#8d6962"/><stop offset=".8" stop-color="#7e5a52"/><stop offset="1" stop-color="#755048"/></linearGradient>
<linearGradient id="jv" x1="0" y1="0" x2="1" y2="0"><stop offset="0" stop-color="#6f7f2a"/><stop offset=".3" stop-color="#a3b168"/><stop offset=".55" stop-color="#c2cb9c"/><stop offset=".78" stop-color="#8c9b42"/><stop offset="1" stop-color="#677825"/></linearGradient>
<linearGradient id="jv2" x1="0" y1="0" x2="1" y2="1"><stop offset="0" stop-color="#93a34e"/><stop offset=".5" stop-color="#778a34"/><stop offset="1" stop-color="#586c20"/></linearGradient>
<filter id="jbl" x="-10%" y="-10%" width="120%" height="120%"><feGaussianBlur stdDeviation=".5"/></filter>
</defs>
<rect width="136" height="136" fill="url(#jw)"/><rect x="40" width="96" height="60" fill="url(#jw2)"/>
<rect x="0" y="0" width="136" height="1.600" fill="#e6e2d8"/>
<rect x="22.500" y="1.600" width="113.500" height="3.400" fill="#cdd2d1"/>
<rect x="22.300" y=".5" width="1.400" height="4.500" fill="#8d8d84"/>
<rect x="23" y="4.600" width="62" height=".8" fill="#9b9f9c"/>
<rect x="53.500" y="5.400" width="82.500" height="13.100" fill="#d6dddf"/>
<rect x="53.500" y="5.400" width="1.600" height="13.100" fill="#c6bdb8"/>
<rect x="53.500" y="18" width="82.500" height=".9" fill="#a7adad"/>
<!-- countertop -->
<rect x="0" y="56" width="136" height="9" fill="#dcdadd"/>
<rect x="0" y="62.500" width="136" height="2.500" fill="#c3bcbc"/>
<!-- cabinet -->
<rect x="0" y="64.800" width="136" height="47" fill="url(#jc)"/><rect x="0" y="111.500" width="136" height="12" fill="#55332b"/>
<rect x="131.500" y="64.800" width="4.500" height="58" fill="#3c221d"/>
<rect x="0" y="64.800" width="136" height="1.200" fill="#3a1f1b"/>
<!-- tall vase -->
<path d="M20.200 5c.9 0 1.500.6 1.700 2 .7 5.500 5.200 13 5.200 27 0 12-1.500 21-2.300 26.500-.2 1.200-1.200 1.700-4.100 1.700s-3.900-.5-4.100-1.700C15.800 55 14.300 46 14.300 34c0-14 3.500-21.500 4.200-27 .2-1.400.8-2 1.700-2z" fill="url(#jv)" filter="url(#jbl)"/>
<!-- round vase -->
<path d="M44.700 32.800h5.100c.4 6.500 1.300 8.500 2 10v22H40.500c-5.500-.6-10.500-2.600-10.800-6.300-.3-4.500 5.500-8.500 10-12.500 3.500-3.300 4.700-7.200 5-13.200z" fill="url(#jv2)" filter="url(#jbl)"/>
<!-- table -->
<path d="M0 111.200c25-.6 52-.2 78 1.600 24 1.700 44 4.200 58 7.500V136H0z" fill="url(#jt)"/>
<path d="M0 126.300c30 .5 70 .6 100-.3 16-.5 28-1.800 36-4V136H0z" fill="#74442f"/>
<path d="M0 126.300c30 .5 70 .6 100-.3 16-.5 28-1.800 36-4v1.300c-8 2.200-20 3.500-36 4-30 .9-70 .8-100 .3z" fill="#94685a"/>
<path d="M128 136c3-1 6-2.500 8-4.500v4.500z" fill="#3a2620"/>
<!-- bottle -->
<ellipse cx="68" cy="121" rx="19" ry="2.600" fill="#4a2a24" opacity=".45" filter="url(#jbl)"/>
<path d="M60 22.500h15.500v4.800c5.500 2.700 9.200 7 9.200 14.500V116c0 3.400-2.400 5.600-6 5.600H57.400c-3.600 0-6-2.200-6-5.600V41.800c0-7.500 3.600-11.800 8.600-14.500z" fill="url(#jb)"/>
<path d="M60 22.500h15.500v4.800c5.500 2.700 9.200 7 9.200 14.500V116c0 3.400-2.400 5.600-6 5.600H57.400c-3.600 0-6-2.200-6-5.600V41.800c0-7.500 3.600-11.800 8.600-14.500z" fill="url(#jb2)"/>
<rect x="60.200" y="20.500" width="15.200" height="6" fill="#e3e6e8" opacity=".92"/>
<rect x="60.200" y="25.300" width="15.200" height="1.500" fill="#f1c96a" opacity=".8"/>
<rect x="59" y="13.300" width="17.500" height="8.300" rx="1.800" fill="#f3f3f3"/>
<rect x="59" y="18.600" width="17.500" height="1" fill="#c9c9c9"/>
<rect x="59.600" y="20.600" width="16.300" height="1.200" fill="#b9bbbb"/>
<text x="54.800" y="75.200" font-family="Liberation Sans, sans-serif" font-weight="700" font-size="8" fill="#fff6e2" opacity=".95">fresh</text>
<text x="54.800" y="83.700" font-family="Liberation Sans, sans-serif" font-weight="700" font-size="8" fill="#fff6e2" opacity=".95">juice.</text>
</svg></div>
  <div class="abs" style="left:376px;top:183px;width:137.500px;height:137px;border:1px solid #3c7fec"></div>
  <div class="abs" style="left:377px;top:238.300px;width:136px;height:1px;background:#e2594d"></div>
  <div class="abs hd" style="left:373.200px;top:180px"></div>
  <div class="abs hd" style="left:510.100px;top:180px"></div>
  <div class="abs hd" style="left:373.200px;top:316.300px"></div>
  <div class="abs hd" style="left:510.100px;top:316.300px"></div>
</div>

<!-- ================= TOOLBAR ================= -->
<div id="tools">
  <div class="abs" style="left:277px;top:554.500px;width:291px;height:34px;background:#222;border:1px solid #2f2f2f;border-radius:5px"></div>
  <!-- undo -->
  <svg class="ico" style="left:288.500px;top:565.500px" width="13" height="12" viewBox="0 0 13 12" fill="none" stroke="#cdcdcd" stroke-width="1.150" stroke-linecap="round" stroke-linejoin="round"><path d="M3.800 1.300 1 4.100l2.800 2.800"/><path d="M1.200 4.100h6.900a3.400 3.400 0 0 1 0 6.800H5.400"/></svg>
  <!-- redo -->
  <svg class="ico" style="left:314px;top:565.500px" width="13" height="12" viewBox="0 0 13 12" fill="none" stroke="#cdcdcd" stroke-width="1.150" stroke-linecap="round" stroke-linejoin="round"><path d="M9.200 1.300 12 4.100 9.200 6.900"/><path d="M11.800 4.100H4.900a3.400 3.400 0 0 0 0 6.800h2.700"/></svg>
  <div class="abs" style="left:340.800px;top:564px;width:1px;height:15.500px;background:#353535"></div>
  <!-- shapes -->
  <svg class="ico" style="left:353.500px;top:564px" width="15" height="15" viewBox="0 0 15 15" fill="none" stroke="#cdcdcd" stroke-width="1.150"><circle cx="5.800" cy="5.800" r="4.900"/><rect x="5.600" y="5.600" width="8.400" height="8.400" rx="2.200"/></svg>
  <!-- text -->
  <svg class="ico" style="left:381px;top:565.500px" width="15" height="12" viewBox="0 0 15 12" fill="none" stroke="#cdcdcd" stroke-width="1.200" stroke-linecap="round" stroke-linejoin="round"><path d="M.8 2.600V.9h8.500v1.700M5 .9v9.800M3.400 10.700h3.300"/><path d="M8.700 6.500V5.300h5.200v1.200M11.300 5.300v5.400M10.200 10.700h2.200" stroke-width="1.050"/></svg>
  <div class="abs" style="left:407.200px;top:564px;width:1px;height:15.500px;background:#353535"></div>
  <!-- minus -->
  <div class="abs" style="left:418px;top:570.900px;width:11.400px;height:1.300px;border-radius:1px;background:#cdcdcd"></div>
  <div class="abs" style="left:437.400px;top:561.400px;width:37px;height:21px;border:1px solid #353535;border-radius:4px"></div>
  <div class="t" style="left:445px;top:566px;font-size:8.370px;color:#b8b8b8">200%</div>
  <!-- plus -->
  <div class="abs" style="left:482px;top:570.900px;width:11.400px;height:1.300px;border-radius:1px;background:#cdcdcd"></div>
  <div class="abs" style="left:487.050px;top:565.900px;width:1.300px;height:11.400px;border-radius:1px;background:#cdcdcd"></div>
  <div class="abs" style="left:503.200px;top:564px;width:1px;height:15.500px;background:#353535"></div>
  <!-- hand -->
  <svg class="ico" style="left:516.500px;top:564.500px" width="15" height="15" viewBox="0 0 15 15"><path d="M4.300 8.600V4.200a1 1 0 0 1 2 0V2.900a1 1 0 0 1 2 0v.7a1 1 0 0 1 2 0v1.100a1 1 0 0 1 2 0v4.600c0 2.800-1.800 4.700-4.500 4.700-2 0-3.100-.8-4.100-2.400L1.600 8.500c-.5-.9.700-1.700 1.400-.9z" fill="#6e6e6e" stroke="#d2d2d2" stroke-width="1" stroke-linejoin="round"/><path d="M4.500 8.300c2.600-.8 5.200-.8 7.800 0v2c0 2.400-1.600 3.600-3.900 3.600-1.700 0-2.700-.7-3.600-2.100z" fill="#222"/></svg>
  <!-- cursor -->
  <div class="abs" style="left:538px;top:560px;width:24.400px;height:24px;border-radius:3.500px;background:#0c5fe9"></div>
  <svg class="ico" style="left:544px;top:566px" width="13" height="13" viewBox="0 0 13 13" fill="none" stroke="#fff" stroke-width="1.150" stroke-linejoin="round"><path d="M1.300 1.300 11.700 5.300 7.400 7.300 5.400 11.700z"/></svg>
</div>

<!-- ================= RIGHT PANEL ================= -->
<div id="right">
  <div class="abs" style="left:7.5px;top:10.8px;width:53.5px;height:21.7px;border-radius:5px;background:#2f2f2f"></div>
  <div class="t m" style="left:21px;top:15.7px;font-size:8.5px;color:#f2f2f2">Design</div>
  <div class="t" style="left:82.5px;top:15.7px;font-size:8.3px;color:#a6a6a6">Layer</div>
  <div class="t" style="left:138.7px;top:15.7px;font-size:8.75px;color:#a6a6a6">Export</div>
  <div class="hr" style="left:0;top:41.6px;width:187px;background:#343434"></div>
  <svg class="ico" style="left:5px;top:53px" width="176" height="15" viewBox="608 98 176 15">
  <g stroke="#cfcfcf" stroke-width="1.05" fill="none" stroke-linecap="round" stroke-linejoin="round">
  <rect x="615.4" y="100.6" width="3.9" height="6.9" rx="1.6"/><path d="M612.2 109.7h10.2"/>
  <rect x="636.1" y="103" width="7.8" height="4.5" rx="1.9"/><path d="M640 100.2v2.6M640 107.7v2.7"/>
  <path d="M657.6 100.2v10.2"/><rect x="660.1" y="103" width="7.3" height="4.5" rx="1.9"/>
  <rect x="682.8" y="101.2" width="4.2" height="7.6" rx="1.8"/><path d="M680 105h2.600M687.2 105h2.700"/>
  <rect x="702" y="103" width="7.3" height="4.500" rx="1.900"/><path d="M711.600 100.200v10.200"/>
  <path d="M724.800 100.700h10.200"/><rect x="727.900" y="102.800" width="4.200" height="7.700" rx="1.800"/>
  </g>
  <g stroke="#7c7c7c" stroke-width="1.05" fill="none" stroke-linecap="round" stroke-linejoin="round">
  <path d="M747.200 100.700h9.800M747.200 109.700h9.800"/><rect x="748.200" y="103" width="7.900" height="4.400" rx="1.900"/>
  <path d="M769.700 100.200v10M780 100.200v10"/><rect x="772.700" y="101.300" width="4.200" height="7.800" rx="1.800"/>
  </g></svg>
  <div class="hr" style="left:7.5px;top:76.7px;width:171px;background:#343434"></div>
  <div class="t m" style="left:7.5px;top:89px;font-size:9.650px;color:#f4f4f4">Size</div>
  <div class="t m" style="left:20.2px;top:114.7px;font-size:6.600px;color:#a8a8a8">W</div>
  <div class="inp" style="left:34.2px;top:110.2px;width:45.800px"></div>
  <div class="t" style="left:41.2px;top:114.7px;font-size:8.400px;color:#ececec">128</div>
  <div class="t m" style="left:87.6px;top:114.7px;font-size:6.600px;color:#a8a8a8">H</div>
  <div class="inp" style="left:101px;top:110.2px;width:45.500px"></div>
  <div class="t" style="left:108px;top:114.7px;font-size:8.400px;color:#ececec">128</div>
  <div class="abs" style="left:162.4px;top:112.3px;width:16px;height:16.500px;border-radius:3px;background:#2f2f2f"></div>
  <svg class="ico" style="left:166px;top:115px" width="9" height="11" viewBox="0 0 9 11" fill="none" stroke="#c4c4c4" stroke-width="1" stroke-linecap="round" stroke-linejoin="round"><rect x="1" y="4.600" width="7" height="5.400" rx="1.300"/><path d="M2.600 4.500V3a1.900 1.900 0 0 1 3.800 0v1.500"/><circle cx="4.500" cy="7.300" r=".5" fill="#c4c4c4"/></svg>
  <svg class="ico" style="left:18.5px;top:142px" width="10" height="10" viewBox="0 0 10 10" fill="none" stroke="#b4b4b4" stroke-width=".95" stroke-linecap="round" stroke-linejoin="round"><path d="M2.300 8.100A3.900 3.900 0 1 1 5 9"/><path d="M.6 6.500 2.200 8.300 4 6.800" /></svg>
  <div class="inp" style="left:34.2px;top:136.4px;width:45.800px"></div>
  <div class="t" style="left:41.2px;top:140.9px;font-size:8.400px;color:#ececec">0°</div>
  <svg class="ico" style="left:86.5px;top:143px" width="8" height="8" viewBox="0 0 8 8" fill="none" stroke="#b4b4b4" stroke-width="1.100" stroke-linecap="round"><path d="M.8 7.200V4.800A4 4 0 0 1 4.800.8H7.200"/></svg>
  <div class="inp" style="left:101px;top:136.4px;width:45.500px"></div>
  <div class="t" style="left:107.6px;top:140.9px;font-size:8.400px;color:#ececec">8</div>
  <svg class="ico" style="left:165.5px;top:142px" width="10" height="10" viewBox="0 0 10 10" fill="none" stroke="#9c9c9c" stroke-width=".9" stroke-linecap="round"><path d="M1 9V3.200A2.200 2.200 0 0 1 3.200 1H9" stroke="#bdbdbd"/><path d="M9 2.600V9H2.600" stroke-dasharray="1 1.300" stroke="#8a8a8a"/></svg>
  <div class="hr" style="left:7.5px;top:167.7px;width:171px;background:#343434"></div>
  <div class="t m" style="left:7.5px;top:180.3px;font-size:10.100px;color:#f4f4f4">Advanced settings</div>
  <div class="t m" style="left:7.5px;top:201px;font-size:8.600px;color:#f4f4f4">Fill</div>
  <div class="t" style="left:18.5px;top:225.3px;font-size:8.37px;color:#a6a6a6">Color</div>
  <div class="abs" style="left:66px;top:221.1px;width:20.700px;height:20.400px;border-radius:3.500px;background:#0DAAED"></div>
  <div class="inp" style="left:91.3px;top:220.8px;width:87.700px"></div>
  <div class="t" style="left:98px;top:226.3px;font-size:8.250px;color:#ececec">#0DAAED</div>
  <div class="t" style="left:18.5px;top:251.9px;font-size:8.55px;color:#a6a6a6">Opacity</div>
  <div class="inp" style="left:66px;top:247.4px;width:43px"></div>
  <div class="t" style="left:73px;top:251.9px;font-size:8.350px;color:#ececec">0.25</div>
  <div class="abs" style="left:114.2px;top:255.4px;width:64.300px;height:5px;border-radius:2.500px;background:#343434"></div>
  <div class="abs" style="left:114.2px;top:255.4px;width:14px;height:5px;border-radius:2.500px 0 0 2.500px;background:#0d62ea"></div>
  <div class="abs" style="left:122.2px;top:250.0px;width:15.800px;height:15.800px;border-radius:50%;background:#212121;border:1.200px solid #1a5fd6"></div>
  <div class="t m" style="left:7.5px;top:277px;font-size:8.500px;color:#f4f4f4">Border</div>
  <div class="t" style="left:18.5px;top:301.5px;font-size:8.37px;color:#a6a6a6">Color</div>
  <div class="abs" style="left:66px;top:297.3px;width:20.700px;height:20.400px;border-radius:3.500px;background:#8ACFF0"></div>
  <div class="inp" style="left:91.3px;top:297px;width:87.700px"></div>
  <div class="t" style="left:98px;top:302.3px;font-size:8.250px;color:#ececec">#8ACFF0</div>
  <div class="t" style="left:18.5px;top:328.2px;font-size:8.45px;color:#a6a6a6">Width</div>
  <div class="inp" style="left:66px;top:323.7px;width:112.700px"></div>
  <div class="t" style="left:72.6px;top:328.2px;font-size:8.400px;color:#ececec">1</div>
  <div class="t" style="left:18.5px;top:354.8px;font-size:8.45px;color:#a6a6a6">Style</div>
  <div class="inp" style="left:66px;top:350.3px;width:112.700px"></div>
  <div class="t" style="left:73px;top:354.8px;font-size:8.400px;color:#ececec">Solid</div>
  <svg class="ico" style="left:162.5px;top:358.3px" width="8" height="6" viewBox="0 0 8 6" fill="none" stroke="#d0d0d0" stroke-width="1.050" stroke-linecap="round" stroke-linejoin="round"><path d="M1 1.300 4 4.300 7 1.300"/></svg>
  <div class="t" style="left:18.5px;top:381.3px;font-size:8.55px;color:#a6a6a6">Opacity</div>
  <div class="inp" style="left:66px;top:376.8px;width:43px"></div>
  <div class="t" style="left:73px;top:381.3px;font-size:8.350px;color:#ececec">0.25</div>
  <div class="abs" style="left:114.2px;top:384.8px;width:64.300px;height:5px;border-radius:2.500px;background:#343434"></div>
  <div class="abs" style="left:114.2px;top:384.8px;width:14px;height:5px;border-radius:2.500px 0 0 2.500px;background:#0d62ea"></div>
  <div class="abs" style="left:122.2px;top:379.4px;width:15.800px;height:15.800px;border-radius:50%;background:#212121;border:1.200px solid #1a5fd6"></div>
  </div>

</div>
</body>
</html>
